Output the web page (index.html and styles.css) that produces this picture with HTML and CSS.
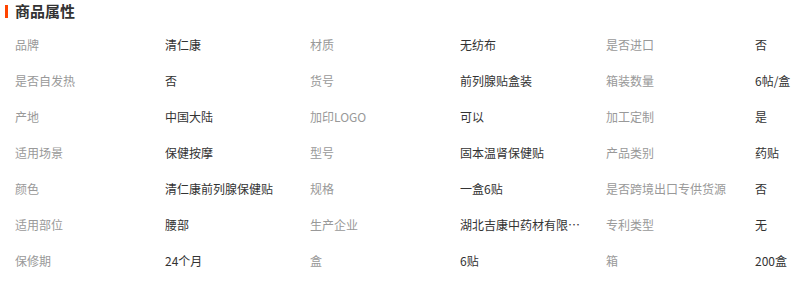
FILE: index.html
```html
<!DOCTYPE html>
<html lang="zh-CN">
<head>
<meta charset="utf-8">
<link rel="stylesheet" href="styles.css">
</head>
<body>
<div class="attrs">
  <h2 class="title">商品属性</h2>
  <div class="grid">
    <div class="lbl">品牌</div><div class="val">清仁康</div>
    <div class="lbl">材质</div><div class="val">无纺布</div>
    <div class="lbl">是否进口</div><div class="val">否</div>

    <div class="lbl">是否自发热</div><div class="val">否</div>
    <div class="lbl">货号</div><div class="val">前列腺贴盒装</div>
    <div class="lbl">箱装数量</div><div class="val">6帖/盒</div>

    <div class="lbl">产地</div><div class="val">中国大陆</div>
    <div class="lbl">加印LOGO</div><div class="val">可以</div>
    <div class="lbl">加工定制</div><div class="val">是</div>

    <div class="lbl">适用场景</div><div class="val">保健按摩</div>
    <div class="lbl">型号</div><div class="val">固本温肾保健贴</div>
    <div class="lbl">产品类别</div><div class="val">药贴</div>

    <div class="lbl">颜色</div><div class="val">清仁康前列腺保健贴</div>
    <div class="lbl">规格</div><div class="val">一盒6贴</div>
    <div class="lbl">是否跨境出口专供货源</div><div class="val">否</div>

    <div class="lbl">适用部位</div><div class="val">腰部</div>
    <div class="lbl">生产企业</div><div class="val">湖北吉康中药材有限公司</div>
    <div class="lbl">专利类型</div><div class="val">无</div>

    <div class="lbl">保修期</div><div class="val">24个月</div>
    <div class="lbl">盒</div><div class="val">6贴</div>
    <div class="lbl">箱</div><div class="val">200盒</div>
  </div>
</div>
</body>
</html>
```
FILE: styles.css
```css
html, body {
  margin: 0;
  padding: 0;
  background: #fff;
}
body {
  font-family: "Noto Sans CJK SC", "Microsoft YaHei", sans-serif;
  font-size: 12px;
}
.attrs {
  width: 803px;
}
.title {
  margin: 0;
  height: 27px;
  box-sizing: border-box;
  padding: 1px 0 0 5px;
  display: flex;
  align-items: flex-start;
  gap: 7px;
  font-size: 15px;
  font-weight: bold;
  line-height: 20px;
  color: #333;
}
.title::before {
  content: "";
  display: block;
  width: 3px;
  height: 13px;
  margin-top: 4px;
  background: #ff4400;
}
.grid {
  display: grid;
  grid-template-columns: 150px 145px 150px 146px 149px 48px;
  padding-left: 15px;
  grid-auto-rows: 36px;
}
.lbl, .val {
  line-height: 36px;
  white-space: nowrap;
  overflow: hidden;
  text-overflow: ellipsis;
}
.lbl {
  color: #999;
}
.val {
  color: #333;
  padding-right: 20px;
}
.val:nth-child(6n) {
  padding-right: 0;
  overflow: visible;
}
```
